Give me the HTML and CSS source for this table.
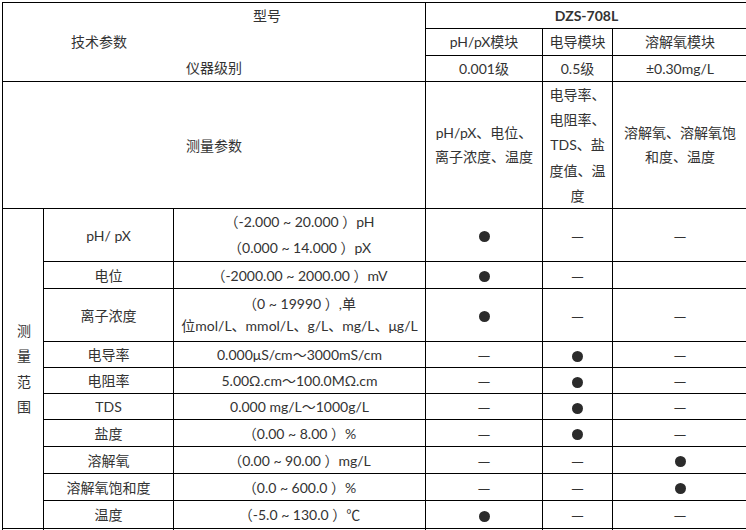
FILE: index.html
```html
<!DOCTYPE html>
<html lang="zh-CN">
<head>
<meta charset="utf-8">
<title>DZS-708L 技术参数</title>
<link rel="stylesheet" href="styles.css">
</head>
<body>
<table class="spec">
  <colgroup>
    <col class="c1"><col class="c2"><col class="c3"><col class="c4"><col class="c5"><col class="c6">
  </colgroup>
  <tr class="r26">
    <td colspan="3" rowspan="3" class="corner">
      <div class="k1">型号</div>
      <div class="k2">技术参数</div>
      <div class="k3">仪器级别</div>
    </td>
    <td colspan="3" class="model">DZS-708L</td>
  </tr>
  <tr class="r26"><td>pH/pX模块</td><td>电导模块</td><td>溶解氧模块</td></tr>
  <tr class="r26"><td>0.001级</td><td>0.5级</td><td>±0.30mg/L</td></tr>
  <tr class="r127">
    <td colspan="3">测量参数</td>
    <td class="lh24">pH/pX、电位、<br>离子浓度、温度</td>
    <td class="tight">电导率、<br>电阻率、<br>TDS、盐<br>度值、温<br>度</td>
    <td class="lh24">溶解氧、溶解氧饱<br>和度、温度</td>
  </tr>
  <tr class="r53">
    <td rowspan="10" class="vert">测<br>量<br>范<br>围</td>
    <td>pH/ pX</td>
    <td class="lh26">（-2.000 ~ 20.000 ）pH<br>（0.000 ~ 14.000 ）pX</td>
    <td><span class="dot" aria-label="●"></span></td><td><span class="dash">—</span></td><td><span class="dash">—</span></td>
  </tr>
  <tr class="r27"><td>电位</td><td>（-2000.00 ~ 2000.00 ）mV</td><td><span class="dot" aria-label="●"></span></td><td><span class="dash">—</span></td><td></td></tr>
  <tr class="r53"><td>离子浓度</td><td class="lh22">（0 ~ 19990 ）,单<br>位mol/L、mmol/L、g/L、mg/L、μg/L</td><td><span class="dot" aria-label="●"></span></td><td><span class="dash">—</span></td><td><span class="dash">—</span></td></tr>
  <tr class="r26"><td>电导率</td><td>0.000μS/cm〜3000mS/cm</td><td><span class="dash">—</span></td><td><span class="dot" aria-label="●"></span></td><td><span class="dash">—</span></td></tr>
  <tr class="r26"><td>电阻率</td><td>5.00Ω.cm〜100.0MΩ.cm</td><td><span class="dash">—</span></td><td><span class="dot" aria-label="●"></span></td><td><span class="dash">—</span></td></tr>
  <tr class="r26"><td>TDS</td><td>0.000 mg/L〜1000g/L</td><td><span class="dash">—</span></td><td><span class="dot" aria-label="●"></span></td><td><span class="dash">—</span></td></tr>
  <tr class="r27"><td>盐度</td><td>（0.00 ~ 8.00 ）%</td><td><span class="dash">—</span></td><td><span class="dot" aria-label="●"></span></td><td><span class="dash">—</span></td></tr>
  <tr class="r27"><td>溶解氧</td><td>（0.00 ~ 90.00 ）mg/L</td><td><span class="dash">—</span></td><td><span class="dash">—</span></td><td><span class="dot" aria-label="●"></span></td></tr>
  <tr class="r27"><td>溶解氧饱和度</td><td>（0.0 ~ 600.0 ）%</td><td><span class="dash">—</span></td><td><span class="dash">—</span></td><td><span class="dot" aria-label="●"></span></td></tr>
  <tr class="r28"><td>温度</td><td>（-5.0 ~ 130.0 ）℃</td><td><span class="dot" aria-label="●"></span></td><td><span class="dash">—</span></td><td><span class="dash">—</span></td></tr>
  <tr class="r26"><td></td><td></td><td></td><td></td><td></td><td></td></tr>
</table>
</body>
</html>
```
FILE: styles.css
```css
html, body {
  margin: 0;
  padding: 0;
  background: #ffffff;
}
body {
  font-family: Lato, "Noto Sans CJK SC", sans-serif;
  font-size: 14px;
  color: #333333;
  overflow: hidden;
  height: 530px;
}
.spec {
  border-collapse: collapse;
  table-layout: fixed;
  width: 745px;
  margin: 2px 0 0 2px;
}
.c1 { width: 41px; }
.c2 { width: 130px; }
.c3 { width: 252px; }
.c4 { width: 117px; }
.c5 { width: 70px; }
.c6 { width: 135px; }
.spec td {
  border: 1px solid #000000;
  text-align: center;
  vertical-align: middle;
  padding: 0 4px;
  line-height: 25px;
  white-space: nowrap;
}
.r26 { height: 26px; }
.r27 { height: 27px; }
.r28 { height: 28px; }
.r53 { height: 53px; }
.r127 { height: 127px; }
.spec td.corner {
  text-align: left;
  padding: 0;
}
.corner div { line-height: 26px; }
.k1 { padding-left: 250px; }
.k2 { padding-left: 68px; }
.k3 { padding-left: 183px; }
.model { font-weight: 700; }
.spec td.lh24 { line-height: 24px; }
.spec td.lh22 { line-height: 22px; }
.spec td.lh26 { line-height: 26px; }
.spec td.tight { line-height: 25.2px; padding: 0; }
.spec td.vert { line-height: 25.5px; padding: 0 0 0 2px; }
.dot {
  display: inline-block;
  width: 11px;
  height: 11px;
  border-radius: 50%;
  background: #2b2b2b;
  vertical-align: middle;
}
.dash {
  display: inline-block;
  font-family: "Noto Sans CJK SC", sans-serif;
  color: #333333;
}
```
